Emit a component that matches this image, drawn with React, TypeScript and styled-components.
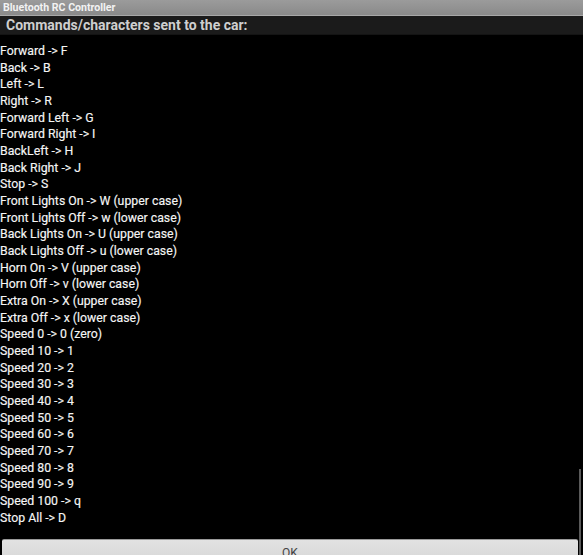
import styled, { createGlobalStyle } from 'styled-components';

const commands = [
  'Forward -> F',
  'Back -> B',
  'Left -> L',
  'Right -> R',
  'Forward Left -> G',
  'Forward Right -> I',
  'BackLeft -> H',
  'Back Right -> J',
  'Stop -> S',
  'Front Lights On -> W (upper case)',
  'Front Lights Off -> w (lower case)',
  'Back Lights On -> U (upper case)',
  'Back Lights Off -> u (lower case)',
  'Horn On -> V (upper case)',
  'Horn Off -> v (lower case)',
  'Extra On -> X (upper case)',
  'Extra Off -> x (lower case)',
  'Speed 0 -> 0 (zero)',
  'Speed 10 -> 1',
  'Speed 20 -> 2',
  'Speed 30 -> 3',
  'Speed 40 -> 4',
  'Speed 50 -> 5',
  'Speed 60 -> 6',
  'Speed 70 -> 7',
  'Speed 80 -> 8',
  'Speed 90 -> 9',
  'Speed 100 -> q',
  'Stop All -> D',
];

const App = () => {
  return (
    <>
      <GlobalStyle />
      <Screen>
        <TitleBar>Bluetooth RC Controller</TitleBar>
        <DialogTitle>Commands/characters sent to the car:</DialogTitle>
        <Body>
          <List>
            {commands.map((c) => (
              <Line key={c}>{c}</Line>
            ))}
          </List>
          <ScrollThumb />
        </Body>
        <ButtonBar>
          <OkButton>OK</OkButton>
        </ButtonBar>
      </Screen>
    </>
  );
};

const GlobalStyle = createGlobalStyle`
  html, body {
    margin: 0;
    padding: 0;
    background: #000;
  }
  body {
    font-family: Roboto, "Liberation Sans", sans-serif;
  }
`;

const Screen = styled.div`
  width: 583px;
  height: 555px;
  display: flex;
  flex-direction: column;
  overflow: hidden;
  background: #000;
`;

const TitleBar = styled.div`
  height: 15px;
  flex-shrink: 0;
  padding-left: 3px;
  background: linear-gradient(#9b9b9b, #8a8a8a);
  border-bottom: 1px solid #a8a8a8;
  color: #f2f2f2;
  font-size: 10.6px;
  font-weight: bold;
  line-height: 15px;
`;

const DialogTitle = styled.div`
  height: 18px;
  flex-shrink: 0;
  padding-left: 6px;
  background: #1b1b1b;
  border-bottom: 1px solid #141414;
  color: #cfcfcf;
  font-size: 14px;
  font-weight: bold;
  line-height: 18px;
`;

const Body = styled.div`
  position: relative;
  flex: 1;
  display: flex;
  flex-direction: column;
  padding-top: 8px;
`;

const List = styled.div`
  display: flex;
  flex-direction: column;
`;

const Line = styled.div`
  height: 16.68px;
  color: #f6f6f6;
  font-size: 12.3px;
  line-height: 16.68px;
  white-space: nowrap;
  -webkit-text-stroke: 0.15px #f6f6f6;
`;

const ScrollThumb = styled.div`
  position: absolute;
  right: 2px;
  bottom: -20px;
  width: 2px;
  height: 90px;
  background: #5a5a5a;
`;

const ButtonBar = styled.div`
  height: 16px;
  flex-shrink: 0;
  padding: 0 5px 0 2px;
`;

const OkButton = styled.div`
  height: 30px;
  background: linear-gradient(#e2e2e2, #d2d2d2);
  border-top: 1px solid #9a9a9a;
  border-radius: 2px;
  color: #444;
  font-size: 12px;
  text-align: center;
  line-height: 26px;
`;

export default App;
